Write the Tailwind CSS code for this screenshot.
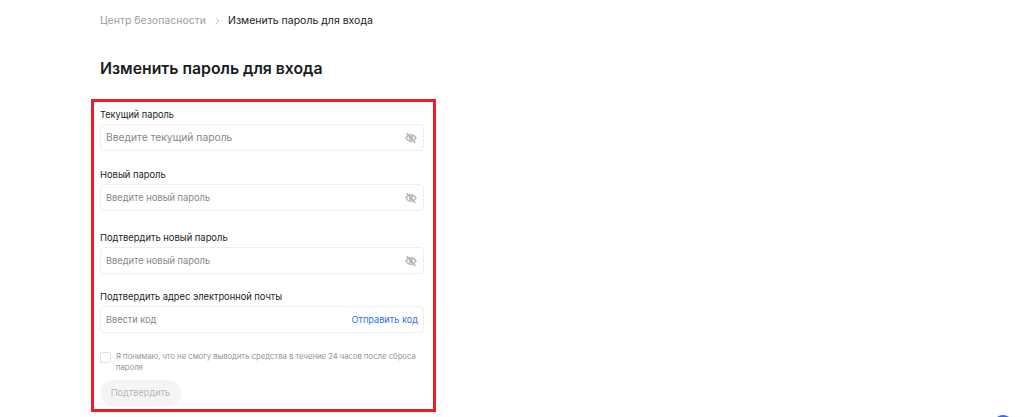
<!DOCTYPE html>
<html lang="ru">
<head>
  <meta charset="UTF-8">
  <title>Изменить пароль для входа</title>
  <meta name="viewport" content="width=device-width, initial-scale=1.0">
  <script src="https://cdn.jsdelivr.net/npm/@tailwindcss/browser@4"></script>
</head>
<body class="bg-white h-[417px] overflow-hidden relative font-['Inter','Noto_Sans',sans-serif] text-[#1a1d21]">
  <nav class="pl-[100px] pt-[14px] h-[14px] box-content flex items-center text-[10.5px] leading-[14px]">
    <span class="text-[#9a9ea6]">Центр безопасности</span>
    <svg class="mx-[6px] w-[10px] h-[10px]" viewBox="0 0 10 10" fill="none" stroke="#c4c7cc" stroke-width="1"><path d="M3.5 1.5 7 5 3.5 8.5"/></svg>
    <span>Изменить пароль для входа</span>
  </nav>

  <h1 class="pl-[100px] mt-[30px] text-[15.8px] leading-[22px] font-semibold">Изменить пароль для входа</h1>

  <form class="ml-[91px] mt-[19px] w-[345px] h-[313px] border-[3px] border-[#ee1c25] pl-[6px] pr-[9px] pt-[6px]">
    <label class="block text-[9.2px] leading-[14px]">Текущий пароль</label>
    <div class="mt-[2px] h-[27px] border border-[#eeeff1] rounded-[4px] pl-[5px] pr-[6px] flex items-center justify-between text-[10.3px] text-[#83878f]">
      <span>Введите текущий пароль</span>
      <svg class="w-[12px] h-[12px]" viewBox="0 0 24 24" fill="none" stroke="#b4b7bc" stroke-width="3" stroke-linecap="round"><path d="M2 12s3.6-6.5 10-6.5S22 12 22 12s-3.6 6.5-10 6.5S2 12 2 12Z"/><circle cx="12" cy="12" r="3"/><path d="M4 3l16 18"/></svg>
    </div>

    <label class="block mt-[17px] text-[9.4px] leading-[14px]">Новый пароль</label>
    <div class="mt-[2px] h-[27px] border border-[#eeeff1] rounded-[4px] pl-[5px] pr-[6px] flex items-center justify-between text-[9.3px] text-[#83878f]">
      <span>Введите новый пароль</span>
      <svg class="w-[12px] h-[12px]" viewBox="0 0 24 24" fill="none" stroke="#b4b7bc" stroke-width="3" stroke-linecap="round"><path d="M2 12s3.6-6.5 10-6.5S22 12 22 12s-3.6 6.5-10 6.5S2 12 2 12Z"/><circle cx="12" cy="12" r="3"/><path d="M4 3l16 18"/></svg>
    </div>

    <label class="block mt-[20px] text-[9.4px] leading-[14px]">Подтвердить новый пароль</label>
    <div class="mt-[2px] h-[27px] border border-[#eeeff1] rounded-[4px] pl-[5px] pr-[6px] flex items-center justify-between text-[9.3px] text-[#83878f]">
      <span>Введите новый пароль</span>
      <svg class="w-[12px] h-[12px]" viewBox="0 0 24 24" fill="none" stroke="#b4b7bc" stroke-width="3" stroke-linecap="round"><path d="M2 12s3.6-6.5 10-6.5S22 12 22 12s-3.6 6.5-10 6.5S2 12 2 12Z"/><circle cx="12" cy="12" r="3"/><path d="M4 3l16 18"/></svg>
    </div>

    <label class="block mt-[16px] text-[9.3px] leading-[14px]">Подтвердить адрес электронной почты</label>
    <div class="mt-[2px] h-[27px] border border-[#eeeff1] rounded-[4px] pl-[5px] pr-[5px] flex items-center justify-between text-[9.2px] text-[#83878f]">
      <span>Ввести код</span>
      <span class="text-[#2f6fed]">Отправить код</span>
    </div>

    <div class="mt-[18px] flex items-start">
      <span class="w-[11px] h-[11px] mt-[1px] shrink-0 border border-[#dfe1e4] rounded-[2px]"></span>
      <p class="ml-[5px] text-[7.7px] leading-[11px] text-[#90949b]">Я понимаю, что не смогу выводить средства в течение 24 часов после сброса пароля</p>
    </div>

    <button type="button" class="block mt-[7px] w-[81px] h-[26px] rounded-full bg-[#f5f5f5] text-[9.2px] text-[#b5b7ba]">Подтвердить</button>
  </form>

  <div class="absolute left-[993px] top-[415px] w-[20px] h-[20px] rounded-full bg-[#2f6fed]"></div>
</body>
</html>
